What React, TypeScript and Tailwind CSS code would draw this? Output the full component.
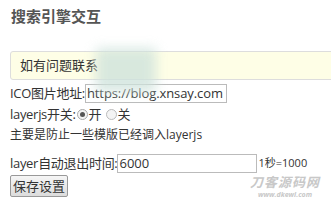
import React from 'react'

const font = { fontFamily: '"Open Sans", "Noto Sans CJK SC", sans-serif' }

export default function App() {
  return (
    <div className="relative w-[331px] h-[202px] overflow-hidden bg-white text-[#333]" style={font}>
      <div className="pl-[11px] pt-[5px] h-[51px] text-[15px] font-semibold text-[#555]">搜索引擎交互</div>
      <div className="relative ml-[10px] mr-[-10px] h-[29px] border border-[#ddd] rounded-[3px] bg-[#fefee6] px-[9px] flex items-center text-[13px] text-[#333]">
        如有问题联系
        <div className="absolute left-[85px] top-[-4px] w-[60px] h-[44px] bg-[#cfe3dc] blur-[6px] opacity-80" />
      </div>
      <div className="px-[10px] pt-[3px] text-[13px] leading-[20px]">
        <div className="flex items-center h-[20px]">
          <span className="tracking-[-0.3px]">ICO图片地址:</span>
          <input
            readOnly
            value="https://blog.xnsay.com"
            className="w-[142px] h-[19px] border border-[#bbb] px-[1px] text-[13px] tracking-[-0.1px] text-[#333] outline-none"
            style={font}
          />
        </div>
        <div className="flex items-center h-[20px] mt-[1px]">
          <span className="tracking-[-0.3px]">layerjs开关:</span>
          <span className="w-[11px] h-[11px] ml-[1px] mr-[1px] rounded-full border border-[#aaa] bg-[#f4f4f4] flex items-center justify-center">
            <span className="w-[5px] h-[5px] rounded-full bg-[#555]" />
          </span>
          <span>开</span>
          <span className="w-[11px] h-[11px] ml-[4px] mr-[1px] rounded-full border border-[#bbb] bg-[#f4f4f4]" />
          <span>关</span>
        </div>
        <div className="text-[12px] h-[18px] mt-[1px]">主要是防止一些模版已经调入layerjs</div>
        <div className="flex items-center h-[20px] mt-[10px]">
          <span className="tracking-[-0.3px]">layer自动退出时间:</span>
          <input
            readOnly
            value="6000"
            className="w-[140px] h-[19px] border border-[#bbb] px-[1px] text-[13px] text-[#333] outline-none"
            style={font}
          />
          <span className="text-[11px] ml-[1px]">1秒=1000</span>
        </div>
        <button className="mt-[2px] h-[22px] px-[2px] border border-[#999] rounded-[2px] bg-gradient-to-b from-[#f6f6f6] to-[#dcdcdc] text-[13px] text-[#333] leading-none">
          保存设置
        </button>
      </div>
      <div className="absolute right-[11px] bottom-[4px] flex flex-col items-center text-[#c8c8c8] leading-none">
        <span className="text-[13px] leading-[13px] font-bold italic tracking-[1px]">刀客源码网</span>
        <span className="text-[7px] leading-[7px] font-bold italic mt-[2px]">www.dkewl.com</span>
      </div>
    </div>
  )
}
